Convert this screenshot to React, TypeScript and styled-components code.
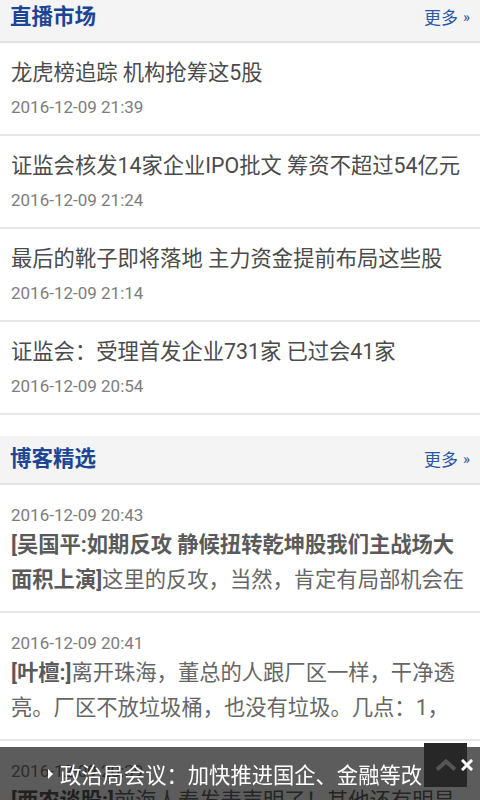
import React from "react";
import styled, { createGlobalStyle } from "styled-components";

const GlobalStyle = createGlobalStyle`
  html, body {
    margin: 0;
    padding: 0;
    background: #ffffff;
  }
  body {
    font-family: Roboto, "Noto Sans CJK SC", "Noto Sans", sans-serif;
  }
`;

const Page = styled.div`
  margin-top: -6px;
  padding-bottom: 60px;
`;

const Section = styled.section`
  margin-bottom: 21px;
`;

const SectionHeader = styled.header`
  display: flex;
  align-items: center;
  justify-content: space-between;
  height: 47px;
  padding: 0 10px 0 10px;
  background: #f4f4f4;
  border-bottom: 2px solid #e2e2e2;
`;

const SectionTitle = styled.h2`
  margin: 0 0 2px 0;
  font-size: 21.5px;
  font-weight: 700;
  color: #1d4596;
  line-height: 1;
`;

const More = styled.a`
  display: flex;
  align-items: center;
  gap: 5px;
  margin-bottom: 3px;
  font-size: 17px;
  color: #2c56a6;
  text-decoration: none;

  span {
    font-size: 15px;
    margin-top: 1px;
  }
`;

const NewsItem = styled.article`
  padding: 15px 11px 15px 11px;
  border-bottom: 2px solid #e6e6e6;
`;

const NewsTitle = styled.div`
  font-size: 21.3px;
  line-height: 30px;
  color: #4b4b4b;
  white-space: nowrap;
  overflow: hidden;
  text-overflow: ellipsis;
`;

const DateLine = styled.div<{ $gap?: number }>`
  margin-top: ${(p) => p.$gap ?? 0}px;
  font-size: 17px;
  line-height: 24px;
  color: #7d7d7d;
`;

const BlogItem = styled.article`
  padding: 18px 11px 14px 11px;
  border-bottom: 2px solid #e6e6e6;
`;

const BlogText = styled.div`
  font-size: 21.3px;
  line-height: 35px;
  color: #666666;
  max-height: 70px;
  overflow: hidden;
  line-break: anywhere;

  b {
    color: #5a5a5a;
    font-weight: 700;
  }
`;

const Ticker = styled.div`
  position: fixed;
  left: 0;
  right: 0;
  bottom: 0;
  height: 53px;
  display: flex;
  align-items: center;
  background: rgba(0, 0, 0, 0.64);
`;

const TickerText = styled.div`
  display: flex;
  align-items: center;
  gap: 7px;
  margin-left: 48px;
  width: 374px;
  overflow: hidden;
  white-space: nowrap;
  font-size: 21.3px;
  color: #ffffff;
`;

const Arrow = styled.span`
  flex: none;
  width: 0;
  height: 0;
  border-top: 5px solid transparent;
  border-bottom: 5px solid transparent;
  border-left: 5px solid #ffffff;
`;

const BackTop = styled.button`
  position: fixed;
  left: 424px;
  bottom: 13px;
  width: 43px;
  height: 44px;
  padding: 0;
  border: none;
  background: #272727;
  display: flex;
  align-items: center;
  justify-content: center;
`;

const Close = styled.span`
  position: fixed;
  left: 461px;
  bottom: 32px;
  width: 12px;
  height: 12px;
`;

const news = [
  { title: "龙虎榜追踪 机构抢筹这5股", time: "2016-12-09 21:39" },
  { title: "证监会核发14家企业IPO批文 筹资不超过54亿元", time: "2016-12-09 21:24" },
  { title: "最后的靴子即将落地 主力资金提前布局这些股", time: "2016-12-09 21:14" },
  { title: "证监会：受理首发企业731家 已过会41家", time: "2016-12-09 20:54" },
];

const blogs = [
  {
    time: "2016-12-09 20:43",
    head: "[吴国平:如期反攻 静候扭转乾坤股我们主战场大面积上演]",
    body: "这里的反攻，当然，肯定有局部机会在，但整体依然需要耐心等待。",
  },
  {
    time: "2016-12-09 20:41",
    head: "[叶檀:]",
    body: "离开珠海，董总的人跟厂区一样，干净透亮。厂区不放垃圾桶，也没有垃圾。几点：1，管理者的精气神。",
  },
  {
    time: "2016-12-09 20:39",
    head: "[西农谈股:]",
    body: "前海人寿发表声明了！其他还有明显的动作吗？",
  },
];

export default function App() {
  return (
    <>
      <GlobalStyle />
      <Page>
        <Section>
          <SectionHeader>
            <SectionTitle>直播市场</SectionTitle>
            <More href="#">
              更多<span>»</span>
            </More>
          </SectionHeader>
          {news.map((n) => (
            <NewsItem key={n.time}>
              <NewsTitle>{n.title}</NewsTitle>
              <DateLine $gap={7}>{n.time}</DateLine>
            </NewsItem>
          ))}
        </Section>
        <Section>
          <SectionHeader>
            <SectionTitle>博客精选</SectionTitle>
            <More href="#">
              更多<span>»</span>
            </More>
          </SectionHeader>
          {blogs.map((b) => (
            <BlogItem key={b.time}>
              <DateLine>{b.time}</DateLine>
              <BlogText>
                <b>{b.head}</b>
                {b.body}
              </BlogText>
            </BlogItem>
          ))}
        </Section>
      </Page>
      <Ticker>
        <TickerText>
          <Arrow />
          政治局会议：加快推进国企、金融等改革
        </TickerText>
      </Ticker>
      <BackTop aria-label="返回顶部">
        <svg width="22" height="12" viewBox="0 0 22 12">
          <path d="M2 10.5 L11 2.5 L20 10.5" fill="none" stroke="#555" strokeWidth="4" />
        </svg>
      </BackTop>
      <Close>
        <svg width="12" height="12" viewBox="0 0 12 12">
          <path d="M2 2 L10 10 M10 2 L2 10" stroke="#fff" strokeWidth="3" strokeLinecap="square" />
        </svg>
      </Close>
    </>
  );
}
